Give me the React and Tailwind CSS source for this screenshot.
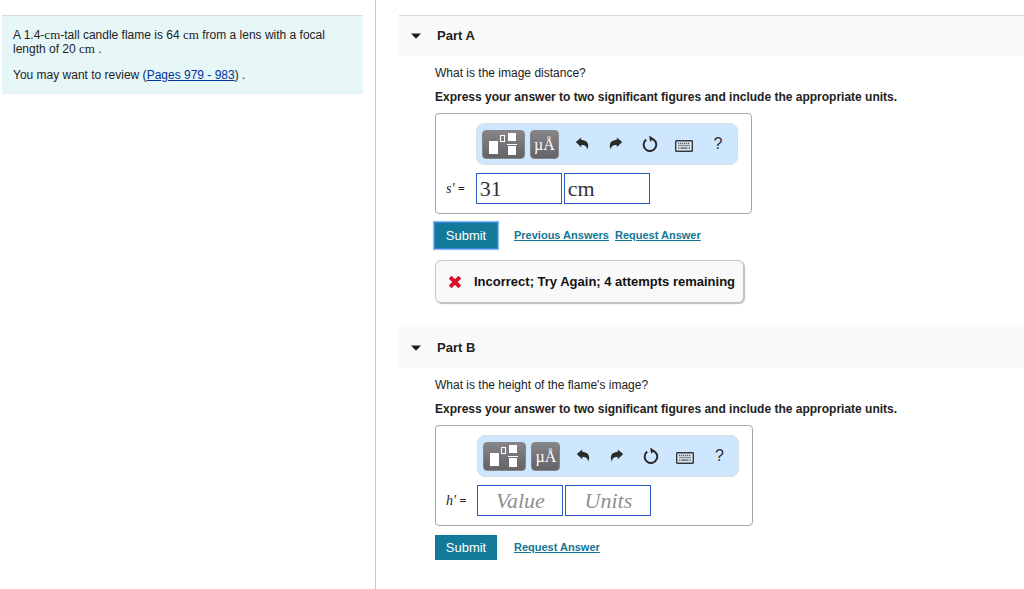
import { useState } from "react";

const TOOL_BUTTON =
  "flex h-[29px] items-center justify-center rounded border border-[#858589] bg-linear-to-b from-[#85858a] to-[#646468] text-white";

function UndoIcon({ flip }) {
  return (
    <svg
      width="14"
      height="14"
      viewBox="0 0 14 14"
      fill="#2b2b2b"
      className={flip ? "-scale-x-100" : ""}
      aria-hidden="true"
    >
      <path d="M0.8 5 6.2 0.4v2.7c4.6 0 7 2.4 7 5.6 0 1.5-.5 2.8-1.4 3.9.4-3.2-1.4-4.7-5.6-4.6v2.3z" />
    </svg>
  );
}

function ResetIcon() {
  return (
    <svg width="16" height="18" viewBox="0 0 16 18" aria-hidden="true">
      <path d="M8.5 3.4A6.3 6.3 0 1 1 4.2 4.6" fill="none" stroke="#2b2b2b" strokeWidth="2" />
      <path d="M7.2 0.4 11.6 3.5 8.1 6.8z" fill="#2b2b2b" />
    </svg>
  );
}

function KeyboardIcon() {
  return (
    <svg width="18" height="12" viewBox="0 0 18 12" aria-hidden="true">
      <rect x="0.7" y="0.7" width="16.6" height="10.6" rx="0.6" fill="#dfeaf5" stroke="#34393f" strokeWidth="1.4" />
      <g stroke="#4b5258" strokeWidth="1.3">
        <path d="M3 3.5h12" strokeDasharray="1.2 0.8" />
        <path d="M3.5 5.6h11.5" strokeDasharray="1.2 0.8" />
        <path d="M3 8.2h1.4M5.3 8.2h7.2M13.5 8.2H15" />
      </g>
    </svg>
  );
}

function TemplateIcon() {
  return (
    <svg width="29" height="23" viewBox="0 0 29 23" aria-hidden="true">
      <g fill="#fff">
        <rect x="0" y="8" width="9" height="13" />
        <rect x="19" y="0" width="8" height="8" />
        <rect x="18" y="11" width="10" height="1" />
        <rect x="19" y="13" width="8" height="9" />
      </g>
      <rect x="11.5" y="2.5" width="4" height="6" fill="none" stroke="#fff" />
    </svg>
  );
}

function Toolbar() {
  return (
    <div className="flex h-[42px] w-[262px] items-center rounded-lg border border-[#d5dde6] bg-[#cfe6ff] pl-[5px]">
      <button type="button" aria-label="Templates" className={`${TOOL_BUTTON} w-[43px]`}>
        <TemplateIcon />
      </button>
      <button
        type="button"
        aria-label="Symbols"
        className={`${TOOL_BUTTON} mr-1.5 ml-[5px] w-[29px] pt-0.5 font-['Liberation_Serif',serif] text-base`}
      >
        µÅ
      </button>
      <button type="button" aria-label="Undo" className="flex w-[34px] justify-center">
        <UndoIcon />
      </button>
      <button type="button" aria-label="Redo" className="flex w-[34px] justify-center">
        <UndoIcon flip />
      </button>
      <button type="button" aria-label="Reset" className="flex w-[34px] justify-center">
        <ResetIcon />
      </button>
      <button type="button" aria-label="Keyboard shortcuts" className="flex w-[34px] justify-center pt-1">
        <KeyboardIcon />
      </button>
      <button type="button" aria-label="Help" className="w-[34px] text-base text-[#2b2b2b]">
        ?
      </button>
    </div>
  );
}

function AnswerField({ label, placeholder, initial }) {
  const [value, setValue] = useState(initial);

  return (
    <input
      type="text"
      aria-label={label}
      placeholder={placeholder}
      value={value}
      onChange={(e) => setValue(e.target.value)}
      className="h-[31px] w-[86px] border border-[#2b59c3] bg-white px-[3px] font-['Liberation_Serif',serif] text-[22px] leading-7 text-[#333] placeholder:text-center placeholder:text-[#8f8f8f] placeholder:italic focus:outline-none"
    />
  );
}

function Part({ title, question, symbol, value = "", units = "", previous, feedback, topLine }) {
  const [open, setOpen] = useState(true);

  return (
    <section className="mb-6">
      <h2 className={`border-t bg-[#f9f9f9] ${topLine ? "border-[#d8dcdc]" : "border-[#f9f9f9]"}`}>
        <button
          type="button"
          aria-expanded={open}
          onClick={() => setOpen(!open)}
          className="flex h-10 w-full items-center gap-4 pl-3 text-[13px] font-bold"
        >
          <svg width="10" height="6" viewBox="0 0 10 6" className={open ? "" : "-rotate-90"} aria-hidden="true">
            <path d="M0 0.5h10L5 5.8z" fill="#1c1c1c" />
          </svg>
          {title}
        </button>
      </h2>
      {open && (
        <div className="pt-[9px] pl-9">
          <p className="text-xs leading-4">{question}</p>
          <p className="mt-2 text-xs leading-4 font-bold">
            Express your answer to two significant figures and include the appropriate units.
          </p>

          <div className="mt-2 grid w-fit grid-cols-[auto_1fr] gap-x-[11px] gap-y-2 rounded border border-[#a6a6a6] py-[9px] pr-[13px] pl-2.5">
            <div className="col-start-2">
              <Toolbar />
            </div>
            <span className="self-center font-['Liberation_Serif',serif] text-sm leading-4">
              <i>{symbol}′</i> <b className="text-xs">=</b>
            </span>
            <div className="flex gap-0.5">
              <AnswerField label={`${title} value`} placeholder="Value" initial={value} />
              <AnswerField label={`${title} units`} placeholder="Units" initial={units} />
            </div>
          </div>

          <div className="mt-[9px] flex items-center text-[11px] font-bold text-[#117596]">
            <button
              type="submit"
              className={`mr-[17px] h-[25px] w-[62px] bg-[#127a98] text-[13px] font-normal text-white ${
                feedback ? "outline-1 outline-[#3d86d6] shadow-[0_0_1px_2px_#8cc0f7]" : ""
              }`}
            >
              Submit
            </button>
            {previous && (
              <a href="#previous" className="mr-1.5 underline">
                Previous Answers
              </a>
            )}
            <a href="#request" className="underline">
              Request Answer
            </a>
          </div>

          {feedback && (
            <div className="mt-3 flex h-[43px] w-fit items-center gap-3 rounded-md border border-[#c4c4c4] bg-[#f9f9f9] pr-2 pl-3 text-[13px] font-bold text-[#111] shadow-[1px_1px_1px_#bbb]">
              <svg width="14" height="14" viewBox="0 0 14 14" aria-hidden="true">
                <path d="M2.2 2.2 11.8 11.8M11.8 2.2 2.2 11.8" stroke="#dc0f2d" strokeWidth="4" />
              </svg>
              {feedback}
            </div>
          )}
        </div>
      )}
    </section>
  );
}

function Unit() {
  return <span className="font-['Liberation_Serif',serif] text-[13px] leading-none">cm</span>;
}

export default function App() {
  return (
    <div className="flex min-h-screen bg-white font-['Liberation_Sans',Arial,sans-serif] text-[#222]">
      <aside className="w-[376px] shrink-0 border-r border-[#c5c9cf] pt-[15px] pr-3 pl-0.5">
        <div className="border-t border-[#d5dddd] bg-[#e7f7f8] px-[11px] pt-3 pb-3 text-xs leading-[14px]">
          <p>
            A 1.4-
            <Unit />
            -tall candle flame is 64 <Unit /> from a lens with a focal length of 20 <Unit /> .
          </p>
          <p className="mt-3">
            You may want to review (
            <a href="#pages" className="text-[#003399] underline">
              Pages 979 - 983
            </a>
            ) .
          </p>
        </div>
      </aside>

      <main className="min-w-0 flex-1 pt-[15px] pl-[23px]">
        <Part
          title="Part A"
          question="What is the image distance?"
          symbol="s"
          value="31"
          units="cm"
          previous
          topLine
          feedback="Incorrect; Try Again; 4 attempts remaining"
        />
        <Part title="Part B" question="What is the height of the flame's image?" symbol="h" />
      </main>
    </div>
  );
}
